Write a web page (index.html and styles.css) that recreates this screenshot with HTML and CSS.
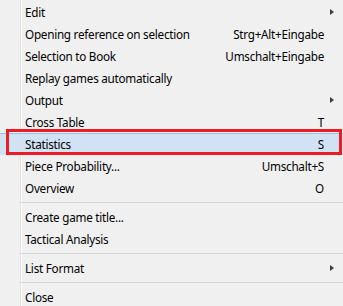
FILE: index.html
```html
<!DOCTYPE html>
<html>
<head>
<meta charset="utf-8">
<link rel="stylesheet" href="styles.css">
</head>
<body>
<div class="menu">
  <div class="item"><span class="label">Edit</span><span class="key"></span><span class="sub"><span class="arrow"></span></span></div>
  <div class="item"><span class="label">Opening reference on selection</span><span class="key">Strg+Alt+Eingabe</span><span class="sub"></span></div>
  <div class="item"><span class="label">Selection to Book</span><span class="key">Umschalt+Eingabe</span><span class="sub"></span></div>
  <div class="item"><span class="label">Replay games automatically</span><span class="key"></span><span class="sub"></span></div>
  <div class="item"><span class="label">Output</span><span class="key"></span><span class="sub"><span class="arrow"></span></span></div>
  <div class="item"><span class="label">Cross Table</span><span class="key">T</span><span class="sub"></span></div>
  <div class="item active"><span class="label">Statistics</span><span class="key">S</span><span class="sub"></span><span class="mark"></span></div>
  <div class="item"><span class="label">Piece Probability...</span><span class="key">Umschalt+S</span><span class="sub"></span></div>
  <div class="item"><span class="label">Overview</span><span class="key">O</span><span class="sub"></span></div>
  <div class="sep"></div>
  <div class="item"><span class="label">Create game title...</span><span class="key"></span><span class="sub"></span></div>
  <div class="item"><span class="label">Tactical Analysis</span><span class="key"></span><span class="sub"></span></div>
  <div class="sep"></div>
  <div class="item"><span class="label">List Format</span><span class="key"></span><span class="sub"><span class="arrow"></span></span></div>
  <div class="sep"></div>
  <div class="item"><span class="label">Close</span><span class="key"></span><span class="sub"></span></div>
</div>
</body>
</html>
```
FILE: styles.css
```css
html, body {
  margin: 0;
  padding: 0;
  background: #f0f0f0;
}
body {
  width: 343px;
  height: 306px;
  overflow: hidden;
}
.menu {
  padding-top: 1px;
  font-family: "Noto Sans", sans-serif;
  font-size: 11.7px;
  letter-spacing: -0.25px;
  color: #000;
  background: linear-gradient(to right, #f0f0f0 20px, #e2e2e2 20px, #e2e2e2 21px, #fff 21px, #fff 22px, #f0f0f0 22px);
  min-height: 320px;
}
.item {
  position: relative;
  display: flex;
  align-items: center;
  height: 22px;
  line-height: 22px;
  padding-left: 25px;
  white-space: nowrap;
}
.label {
  flex: 1;
}
.key {
  text-align: right;
}
.sub {
  width: 19px;
  display: flex;
  align-items: center;
  padding-left: 6px;
  box-sizing: border-box;
}
.arrow {
  width: 0;
  height: 0;
  border-top: 3.5px solid transparent;
  border-bottom: 3.5px solid transparent;
  border-left: 4px solid #3c3c3c;
}
.active {
  background: #d0e2f4;
  box-shadow: inset 0 1px 0 #99c0e6;
}
.mark {
  position: absolute;
  left: 6px;
  top: -4px;
  width: 336px;
  height: 26px;
  box-sizing: border-box;
  border: 3px solid #ec1c24;
}
.sep {
  height: 7px;
  margin-left: 21px;
  box-sizing: border-box;
  padding-top: 3px;
}
.sep::before {
  content: "";
  display: block;
  height: 1px;
  background: #d7d7d7;
}
```
